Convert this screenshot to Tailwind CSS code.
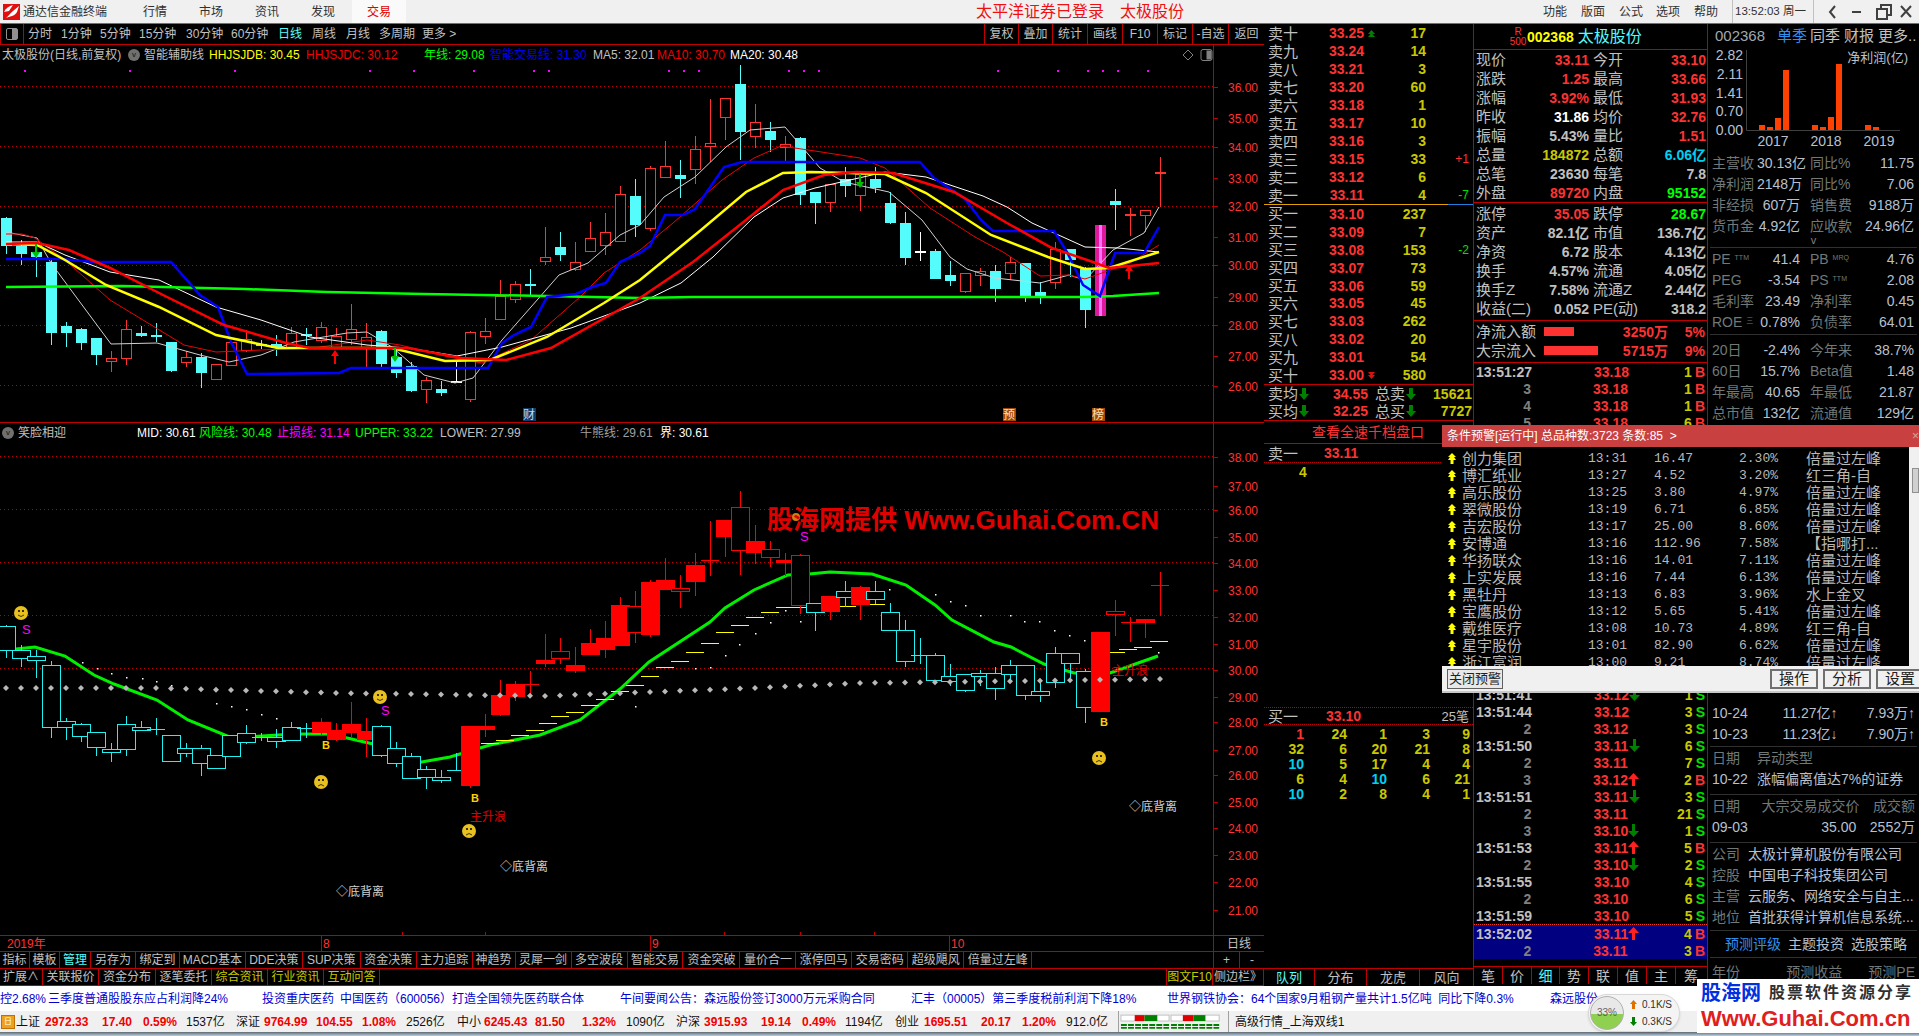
<!DOCTYPE html>
<html lang="zh">
<head>
    <meta charset="UTF-8">
    <title>通达信金融终端</title>
    <script src="https://cdn.jsdelivr.net/npm/@tailwindcss/browser@4"></script>
</head>
<body class="relative flex flex-col w-[1919px] h-[1036px] overflow-hidden bg-black text-[12px] leading-none text-[#c0c0c0] font-['Liberation_Sans','Noto_Sans_CJK_SC',sans-serif]">

    <!-- Title bar -->
    <header class="flex items-center h-[24px] shrink-0 bg-[#f0f0f0] border-b border-[#707070] text-[#303030]">
        <svg class="ml-[3px] w-[17px] h-[16px]" viewBox="0 0 17 16"><rect width="17" height="16" fill="#e01010"/><path d="M3 14 C6 12 7 9 10 7 L16 2 L14 8 C12 12 8 12 3 14Z" fill="#fff"/><path d="M1 8 C3 4 6 2 10 1 L6 7Z" fill="#fff"/></svg>
        <span class="ml-[3px] w-[120px]">通达信金融终端</span>
        <span class="w-[56px]">行情</span>
        <span class="w-[56px]">市场</span>
        <span class="w-[56px]">资讯</span>
        <span class="w-[41px]">发现</span>
        <span class="flex items-center justify-center w-[54px] h-full bg-[#fafafa] text-[#e00000]">交易</span>
        <span class="ml-[570px] w-[144px] text-[16px] text-[#f01010]">太平洋证券已登录</span>
        <span class="w-[423px] text-[16px] text-[#f01010]">太极股份</span>
        <span class="w-[38px]">功能</span>
        <span class="w-[38px]">版面</span>
        <span class="w-[37px]">公式</span>
        <span class="w-[38px]">选项</span>
        <span class="w-[38px]">帮助</span>
        <span class="flex items-center shrink-0 h-full w-[82px] px-[2px] border-x border-[#c0c0c0] text-[11.5px] whitespace-nowrap">13:52:03 周一</span>
        <svg class="shrink-0 w-[104px] h-[20px]" viewBox="0 0 104 20" fill="none" stroke="#404040" stroke-width="2"><path d="M21 4 L16 10 L21 16"/><path d="M38 10 H47"/><path d="M63 7 H73 V17 H63Z M67 7 V3 H77 V13 H73"/><path d="M87 4 L97 15 M97 4 L87 15"/></svg>
    </header>

    <div class="flex h-[962px] shrink-0">
        <!-- Charts -->
        <div class="flex flex-col w-[1264px] shrink-0">
            <nav class="flex h-[21px] shrink-0 items-center border-b border-[#c00000]">
                <span class="flex items-center justify-center w-[24px] h-full border-x border-[#c00000]"><span class="w-[12px] h-[12px] rounded-[2px] border border-[#909090] bg-[linear-gradient(90deg,#000_50%,#909090_50%)]"></span></span>
                <span class="ml-[4px] w-[33px]">分时</span>
                <span class="w-[39px]">1分钟</span>
                <span class="w-[39px]">5分钟</span>
                <span class="w-[47px]">15分钟</span>
                <span class="w-[45px]">30分钟</span>
                <span class="w-[47px]">60分钟</span>
                <span class="w-[34px] text-[#54fcfc]">日线</span>
                <span class="w-[34px]">周线</span>
                <span class="w-[33px]">月线</span>
                <span class="w-[43px]">多周期</span>
                <span class="w-[562px]">更多 &gt;</span>
                <span class="flex items-center justify-center w-[34px] h-full border-l border-[#c00000]">复权</span>
                <span class="flex items-center justify-center w-[34px] h-full border-l border-[#c00000]">叠加</span>
                <span class="flex items-center justify-center w-[35px] h-full border-l border-[#c00000]">统计</span>
                <span class="flex items-center justify-center w-[35px] h-full border-l border-[#c00000]">画线</span>
                <span class="flex items-center justify-center w-[35px] h-full border-l border-[#c00000]">F10</span>
                <span class="flex items-center justify-center w-[35px] h-full border-l border-[#c00000]">标记</span>
                <span class="flex items-center justify-center w-[36px] h-full border-l border-[#c00000]">-自选</span>
                <span class="flex items-center justify-center w-[36px] h-full border-l border-[#c00000]">返回</span>
            </nav>

            <!-- Main K-line chart -->
            <section class="relative h-[378px] shrink-0 border-b border-[#c00000]">
                <svg id="mainChart" class="absolute inset-0" width="1264" height="378" viewBox="0 45 1264 378"></svg>
                <div class="relative flex items-center h-[19px] pl-[2px]">
                    <span class="w-[126px]">太极股份(日线,前复权)</span>
                    <span class="flex items-center justify-center w-[12px] h-[12px] mr-[4px] rounded-full bg-[#707070] text-[8px] text-[#111]">v</span>
                    <span class="w-[65px]">智能辅助线</span>
                    <span class="w-[97px] text-[#ffff00]">HHJSJDB: 30.45</span>
                    <span class="w-[118px] text-[#f00000]">HHJSJDC: 30.12</span>
                    <span class="w-[66px] text-[#00ff00]">年线: 29.08</span>
                    <span class="w-[103px] text-[#0000f0]">智能交易线: 31.30</span>
                    <span class="w-[64px]">MA5: 32.01</span>
                    <span class="w-[73px] text-[#f00000]">MA10: 30.70</span>
                    <span class="w-[452px] text-white">MA20: 30.48</span>
                    <svg class="w-[32px] h-[14px]" viewBox="0 0 32 14" fill="none" stroke="#808080"><path d="M6 2 L11 7 L6 12 L1 7Z"/><rect x="19" y="1.5" width="11" height="11" rx="2"/><rect x="25" y="3" width="4" height="8" fill="#808080"/></svg>
                </div>
            </section>

            <!-- Lower signal chart -->
            <section class="relative h-[512px] shrink-0">
                <svg id="subChart" class="absolute inset-0" width="1264" height="512" viewBox="0 423 1264 512"></svg>
                <div class="relative flex items-center h-[19px] pl-[2px]">
                    <span class="flex items-center justify-center w-[12px] h-[12px] mr-[4px] rounded-full bg-[#707070] text-[8px] text-[#111]">v</span>
                    <span class="w-[119px]">笑脸相迎</span>
                    <span class="w-[62px] text-white">MID: 30.61</span>
                    <span class="w-[78px] text-[#00ff00]">风险线: 30.48</span>
                    <span class="w-[78px] text-[#ff00ff]">止损线: 31.14</span>
                    <span class="w-[85px] text-[#00ff00]">UPPER: 33.22</span>
                    <span class="w-[140px]">LOWER: 27.99</span>
                    <span class="w-[80px] text-[#a0a0a0]">牛熊线: 29.61</span>
                    <span class="text-white">界: 30.61</span>
                </div>
            </section>

            <!-- Time axis -->
            <div class="flex h-[16px] shrink-0 items-center border-t border-[#c00000] text-[#ff3232]">
                <span class="w-[321px] pl-[7px]">2019年</span>
                <span class="flex items-center w-[329px] h-full pl-[1px] border-l border-[#c00000]">8</span>
                <span class="flex items-center w-[299px] h-full pl-[1px] border-l border-[#c00000]">9</span>
                <span class="flex items-center w-[264px] h-full pl-[1px] border-l border-[#c00000]">10</span>
                <span class="flex items-center justify-center w-[51px] h-full border-l border-[#c00000] text-[#c0c0c0]">日线</span>
            </div>

            <!-- Button rows -->
            <div id="btnRow1" class="flex h-[17px] shrink-0 items-center border-t border-[#c00000]"></div>
            <div class="flex h-[18px] shrink-0 items-center border-y border-[#c00000]">
                <span class="flex items-center justify-center w-[43px] h-full border-r border-[#c00000]">扩展∧</span>
                <span class="flex items-center justify-center w-[56px] h-full border-r border-[#c00000]">关联报价</span>
                <span class="flex items-center justify-center w-[57px] h-full border-r border-[#c00000]">资金分布</span>
                <span class="flex items-center justify-center w-[56px] h-full border-r border-[#c00000]">逐笔委托</span>
                <span class="flex items-center justify-center w-[56px] h-full border-r border-[#c00000] text-[#c8c800]">综合资讯</span>
                <span class="flex items-center justify-center w-[56px] h-full border-r border-[#c00000] text-[#c8c800]">行业资讯</span>
                <span class="flex items-center justify-center w-[56px] h-full border-r border-[#c00000] text-[#c8c800]">互动问答</span>
                <span class="w-[786px]"></span>
                <span class="flex items-center justify-center w-[47px] h-full border-x border-[#c00000] text-[#c8c800]">图文F10</span>
                <span class="flex items-center justify-center w-[51px] h-full border-r border-[#c00000]">侧边栏》</span>
            </div>
        </div>

        <!-- Order book -->
        <div class="flex flex-col w-[210px] shrink-0 border-r border-[#c00000] text-[15px]">
            <div id="asks" class="flex flex-col h-[180px] pt-[0px]"></div>
            <div class="h-[1px] shrink-0 bg-[linear-gradient(90deg,#e0a000_88%,#2080e0_88%)]"></div>
            <div id="bids" class="flex flex-col h-[180px] border-b border-[#c00000]"></div>
            <div class="flex flex-col justify-center h-[36px] shrink-0 border-b border-[#c00000]">
                <div class="grid grid-cols-[100px_60px_44px] items-center h-[18px] pl-[4px]">
                    <span class="flex items-center">卖均<svg class="w-[12px] h-[12px]" viewBox="0 0 12 12"><path d="M4 0H8V6H11L6 12L1 6H4Z" fill="#008000"/></svg><b class="ml-auto text-[14px] text-[#ff3232]">34.55</b></span>
                    <span class="flex items-center pl-[7px] whitespace-nowrap">总卖<svg class="w-[12px] h-[12px]" viewBox="0 0 12 12"><path d="M4 0H8V6H11L6 12L1 6H4Z" fill="#008000"/></svg></span>
                    <b class="text-right text-[14px] text-[#c8c800]">15621</b>
                </div>
                <div class="grid grid-cols-[100px_60px_44px] items-center h-[18px] pl-[4px]">
                    <span class="flex items-center">买均<svg class="w-[12px] h-[12px]" viewBox="0 0 12 12"><path d="M4 0H8V6H11L6 12L1 6H4Z" fill="#008000"/></svg><b class="ml-auto text-[14px] text-[#ff3232]">32.25</b></span>
                    <span class="flex items-center pl-[7px] whitespace-nowrap">总买<svg class="w-[12px] h-[12px]" viewBox="0 0 12 12"><path d="M4 0H8V6H11L6 12L1 6H4Z" fill="#008000"/></svg></span>
                    <b class="text-right text-[14px] text-[#c8c800]">7727</b>
                </div>
            </div>
            <div class="flex items-center h-[23px] shrink-0 pl-[48px] border-b border-[#c00000] text-[14px] text-[#ff3232]">
                <span>查看全速千档盘口</span>
            </div>
            <div class="flex items-center h-[19px] shrink-0 pl-[4px] border-b border-dotted border-[#c00000]">
                <span class="w-[56px]">卖一</span><b class="text-[14px] text-[#ff3232]">33.11</b>
            </div>
            <b class="h-[244px] shrink-0 pt-[2px] pl-[35px] text-[14px] text-[#c8c800]">4</b>
            <div class="flex items-center justify-between h-[18px] shrink-0 px-[4px] border-y border-dotted border-[#c00000] text-[#c0c0c0]">
                <span class="flex items-center"><span class="w-[58px]">买一</span><b class="text-[14px] text-[#ff3232]">33.10</b></span><span class="text-[13px]">25笔</span>
            </div>
            <div id="queue" class="flex-1 pt-[1px] text-[14px] font-bold"></div>
            <div class="flex h-[18px] shrink-0 items-center border-t border-[#c00000] text-[13px]">
                <span class="flex items-center justify-center w-[51px] h-full border-r border-[#c00000] text-[#54fcfc]">队列</span>
                <span class="flex items-center justify-center w-[52px] h-full border-r border-[#c00000]">分布</span>
                <span class="flex items-center justify-center w-[53px] h-full border-r border-[#c00000]">龙虎</span>
                <span class="flex items-center justify-center w-[53px] h-full">风向</span>
            </div>
        </div>

        <!-- Quote and tick list -->
        <div class="flex flex-col w-[234px] shrink-0 border-r border-[#c00000] text-[15px]">
            <div class="flex items-center h-[26px] shrink-0 pl-[36px] border-b border-[#c00000]">
                <span class="flex flex-col items-center w-[16px] text-[10px] leading-[10px] text-[#ff3232]"><span>R</span><span>500</span></span>
                <b class="ml-[1px] text-[14px] text-[#ffff00]">002368</b>
                <span class="ml-[4px] text-[16px] text-[#54fcfc]">太极股份</span>
            </div>
            <div id="quoteA" class="flex flex-col h-[153px] shrink-0 border-b border-[#c00000]"></div>
            <div id="quoteB" class="flex flex-col h-[118px] shrink-0 pt-[1px] border-b border-[#c00000]"></div>
            <div class="flex flex-col h-[42px] shrink-0 pt-[1px] border-b border-[#c00000]">
                <div class="flex items-center h-[19px] px-[2px]">
                    <span class="w-[68px]">净流入额</span><span class="w-[30px] h-[9px] bg-[#ff3232]"></span>
                    <b class="w-[94px] text-right text-[14px] text-[#ff3232]">3250万</b><b class="flex-1 text-right text-[14px] text-[#ff3232]">5%</b>
                </div>
                <div class="flex items-center h-[19px] px-[2px]">
                    <span class="w-[68px]">大宗流入</span><span class="w-[54px] h-[9px] bg-[#ff3232]"></span>
                    <b class="w-[70px] text-right text-[14px] text-[#ff3232]">5715万</b><b class="flex-1 text-right text-[14px] text-[#ff3232]">9%</b>
                </div>
            </div>
            <div id="ticks" class="flex flex-col h-[603px] shrink-0 text-[14px]"></div>
            <div class="flex h-[18px] shrink-0 items-center border-t border-[#c00000] text-[14px]">
                <span class="flex items-center justify-center w-[29px] h-full border-r border-[#c00000]">笔</span>
                <span class="flex items-center justify-center w-[29px] h-full border-r border-[#c00000]">价</span>
                <span class="flex items-center justify-center w-[28px] h-full border-r border-[#c00000] text-[#54fcfc]">细</span>
                <span class="flex items-center justify-center w-[29px] h-full border-r border-[#c00000]">势</span>
                <span class="flex items-center justify-center w-[29px] h-full border-r border-[#c00000]">联</span>
                <span class="flex items-center justify-center w-[29px] h-full border-r border-[#c00000]">值</span>
                <span class="flex items-center justify-center w-[29px] h-full border-r border-[#c00000]">主</span>
                <span class="flex items-center justify-center w-[30px] h-full">筹</span>
            </div>
        </div>

        <!-- F10 side column -->
        <div class="flex flex-col flex-1 text-[14px] text-[#b8c0d0]">
            <div class="flex items-center h-[21px] shrink-0 pl-[7px] pt-[2px] text-[15px]">
                <span class="w-[62px] text-[#a0a8b0]">002368</span>
                <span class="w-[33px] text-[#3090f0]">单季</span>
                <span class="w-[34px] text-[#c0c0c0]">同季</span>
                <span class="w-[34px] text-[#c0c0c0]">财报</span>
                <span class="text-[#c0c0c0] whitespace-nowrap">更多..</span>
            </div>
            <svg class="shrink-0" width="211" height="107" viewBox="1708 45 211 107">
                <g fill="#b8c0d0" font-size="14" text-anchor="end"><text x="1743" y="60">2.82</text><text x="1743" y="79">2.11</text><text x="1743" y="98">1.41</text><text x="1743" y="116">0.70</text><text x="1743" y="135">0.00</text></g>
                <text x="1908" y="62" fill="#b8c0d0" font-size="13" text-anchor="end">净利润(亿)</text>
                <path d="M1746.5 50V130.5H1900" stroke="#404040" fill="none"/>
                <g fill="#ff4000"><rect x="1759" y="125" width="6" height="5"/><rect x="1767" y="127" width="6" height="3"/><rect x="1775" y="118" width="6" height="12"/><rect x="1783" y="70" width="6" height="60"/><rect x="1812" y="125" width="6" height="5"/><rect x="1820" y="127" width="6" height="3"/><rect x="1828" y="117" width="6" height="13"/><rect x="1836" y="64" width="6" height="66"/><rect x="1865" y="125" width="6" height="5"/><rect x="1873" y="127" width="6" height="3"/></g>
                <g fill="#b8c0d0" font-size="14" text-anchor="middle"><text x="1773" y="146">2017</text><text x="1826" y="146">2018</text><text x="1879" y="146">2019</text></g>
            </svg>
            <div id="finA" class="shrink-0"></div>
            <div class="flex items-end justify-center h-[10px] shrink-0 pb-[0px] text-[11px] text-[#808080]"><span>v</span></div>
            <div class="h-[1px] shrink-0 mt-[1px] mx-[2px] bg-[#303030]"></div>
            <div id="finB" class="shrink-0"></div>
            <div class="h-[1px] shrink-0 mt-[2px] mb-[4px] mx-[2px] bg-[#303030]"></div>
            <div id="finC" class="shrink-0"></div>
            <div class="h-[1px] shrink-0 mt-[2px] mx-[2px] bg-[#303030]"></div>
            <div class="h-[276px] shrink-0"></div>
            <div class="flex items-center justify-between h-[21px] shrink-0 px-[4px] text-[14px]"><span class="w-[50px]">10-24</span><span class="w-[62px] text-right">11.27亿↑</span><span class="w-[64px] text-right">7.93万↑</span></div>
            <div class="flex items-center justify-between h-[21px] shrink-0 px-[4px] text-[14px]"><span class="w-[50px]">10-23</span><span class="w-[62px] text-right">11.23亿↓</span><span class="w-[64px] text-right">7.90万↑</span></div>
            <div class="h-[1px] shrink-0 mt-[2px] mx-[2px] bg-[#303030]"></div>
            <div class="flex items-center h-[21px] shrink-0 px-[4px] text-[#707878]"><span class="w-[45px]">日期</span><span>异动类型</span></div>
            <div class="flex items-center h-[21px] shrink-0 px-[4px]"><span class="w-[45px]">10-22</span><span>涨幅偏离值达7%的证券</span></div>
            <div class="h-[1px] shrink-0 mt-[5px] mx-[2px] bg-[#303030]"></div>
            <div class="flex items-center justify-between h-[21px] shrink-0 px-[4px] text-[#707878]"><span>日期</span><span class="ml-[8px]">大宗交易成交价</span><span>成交额</span></div>
            <div class="flex items-center justify-between h-[21px] shrink-0 px-[4px]"><span>09-03</span><span class="ml-[60px]">35.00</span><span>2552万</span></div>
            <div class="h-[1px] shrink-0 mt-[5px] mx-[2px] bg-[#303030]"></div>
            <div class="flex items-center h-[21px] shrink-0 px-[4px]"><span class="w-[36px] text-[#707878]">公司</span><span class="whitespace-nowrap">太极计算机股份有限公司</span></div>
            <div class="flex items-center h-[21px] shrink-0 px-[4px]"><span class="w-[36px] text-[#707878]">控股</span><span class="whitespace-nowrap">中国电子科技集团公司</span></div>
            <div class="flex items-center h-[21px] shrink-0 px-[4px]"><span class="w-[36px] text-[#707878]">主营</span><span class="whitespace-nowrap">云服务、网络安全与自主...</span></div>
            <div class="flex items-center h-[21px] shrink-0 px-[4px]"><span class="w-[36px] text-[#707878]">地位</span><span class="whitespace-nowrap">首批获得计算机信息系统...</span></div>
            <div class="h-[1px] shrink-0 mt-[3px] mx-[2px] bg-[#303030]"></div>
            <div class="flex items-center justify-center gap-[7px] h-[26px] shrink-0 pl-[5px]"><span class="text-[#3090f0]">预测评级</span><span>主题投资</span><span>选股策略</span></div>
            <div class="h-[1px] shrink-0 mx-[2px] bg-[#303030]"></div>
            <div class="flex items-center justify-between h-[27px] shrink-0 px-[4px] text-[#707878]"><span>年份</span><span class="ml-[20px]">预测收益</span><span>预测PE</span></div>
        </div>
    </div>

    <!-- News ticker -->
    <div class="flex items-center h-[25px] shrink-0 bg-white text-[12px] text-[#0000d0] whitespace-nowrap overflow-hidden">
        <span class="w-[48px] shrink-0">控2.68%</span>
        <span class="w-[214px] shrink-0">三季度普通股股东应占利润降24%</span>
        <span class="w-[78px] shrink-0">投资重庆医药</span>
        <span class="w-[280px] shrink-0">中国医药（600056）打造全国领先医药联合体</span>
        <span class="w-[291px] shrink-0">午间要闻公告：森远股份签订3000万元采购合同</span>
        <span class="w-[256px] shrink-0">汇丰（00005）第三季度税前利润下降18%</span>
        <span class="w-[383px] shrink-0">世界钢铁协会：64个国家9月粗钢产量共计1.5亿吨&nbsp;&nbsp;同比下降0.3%</span>
        <span class="shrink-0">森远股份</span>
    </div>

    <!-- Market index status bar -->
    <div class="flex items-center h-[21px] shrink-0 bg-[#f0f0f0] text-[#101010] whitespace-nowrap">
        <span class="flex items-center justify-center w-[14px] h-[14px] mx-[1px] bg-[#f0a020] border border-[#c07000] text-[8px] text-white">日</span>
        <span class="w-[29px]">上证</span><b class="w-[57px] text-[#f00000]">2972.33</b><b class="w-[41px] text-[#f00000]">17.40</b><b class="w-[43px] text-[#f00000]">0.59%</b><span class="w-[50px]">1537亿</span>
        <span class="w-[28px]">深证</span><b class="w-[52px] text-[#f00000]">9764.99</b><b class="w-[46px] text-[#f00000]">104.55</b><b class="w-[44px] text-[#f00000]">1.08%</b><span class="w-[51px]">2526亿</span>
        <span class="w-[27px]">中小</span><b class="w-[51px] text-[#f00000]">6245.43</b><b class="w-[47px] text-[#f00000]">81.50</b><b class="w-[44px] text-[#f00000]">1.32%</b><span class="w-[50px]">1090亿</span>
        <span class="w-[28px]">沪深</span><b class="w-[57px] text-[#f00000]">3915.93</b><b class="w-[41px] text-[#f00000]">19.14</b><b class="w-[43px] text-[#f00000]">0.49%</b><span class="w-[50px]">1194亿</span>
        <span class="w-[29px]">创业</span><b class="w-[57px] text-[#f00000]">1695.51</b><b class="w-[41px] text-[#f00000]">20.17</b><b class="w-[44px] text-[#f00000]">1.20%</b><span class="w-[52px]">912.0亿</span>
        <svg class="w-[111px] h-[21px] shrink-0 border-x border-[#a0a0a0]" viewBox="0 0 111 21">
            <rect x="2" y="4" width="49" height="6" fill="#fff" stroke="#c0c0c0"/><rect x="16" y="4" width="10" height="6" fill="#e00000"/><rect x="26" y="4" width="13" height="6" fill="#008000"/>
            <rect x="53" y="4" width="49" height="6" fill="#fff" stroke="#c0c0c0"/><rect x="65" y="4" width="11" height="6" fill="#e00000"/><rect x="76" y="4" width="12" height="6" fill="#008000"/>
            <path d="M2 14H51M2 17H51M53 14H102M53 17H102" stroke="#008000" stroke-width="2" stroke-dasharray="6 1.2"/>
        </svg>
        <span class="ml-[6px]">高级行情_上海双线1</span>
    </div>
    <div class="h-[4px] shrink-0 bg-[linear-gradient(180deg,#606870,#b8d0e0)]"></div>

    <!-- Alert popup -->
    <aside class="absolute left-[1442px] top-[425px] flex flex-col w-[477px] h-[268px] bg-black border-b-2 border-[#c8c8c8]">
        <div class="flex items-center justify-between h-[22px] shrink-0 pl-[5px] bg-[#c84040] text-white">
            <span>条件预警[运行中] 总品种数:3723 条数:85 &nbsp;&gt;</span><span class="text-[#e0a0a0]">×</span>
        </div>
        <div class="relative flex-1 overflow-hidden pr-[10px]">
            <div id="alerts" class="pt-[3px]"></div>
            <div class="absolute right-0 top-0 bottom-0 w-[10px] bg-[#f0f0f0]"><div class="mt-[21px] h-[25px] w-[7px] ml-[3px] bg-[#d0d0d0] border border-[#909090]"></div></div>
        </div>
        <div class="flex items-center h-[25px] shrink-0 px-[5px] bg-[#f0f0f0] text-[15px] text-[#202020]">
            <span class="flex items-center justify-center w-[56px] h-[20px] border border-[#606060] bg-[#e8e8e8] text-[13px]">关闭预警</span>
            <span class="ml-auto flex items-center justify-center w-[48px] h-[20px] border-2 border-[#707070] bg-[#f0f0f0]">操作</span>
            <span class="ml-[5px] flex items-center justify-center w-[48px] h-[20px] border-2 border-[#707070] bg-[#f0f0f0]">分析</span>
            <span class="ml-[5px] -mr-[10px] flex items-center justify-center w-[48px] h-[20px] border-2 border-[#707070] bg-[#f0f0f0]">设置</span>
        </div>
    </aside>

    <!-- Net speed ball -->
    <div class="absolute left-[1588px] top-[994px] flex items-center w-[92px] h-[38px] rounded-full bg-[#f4f4f4] border border-[#d8d8d8] shadow">
        <span class="relative flex items-center justify-center w-[34px] h-[34px] ml-[1px] rounded-full overflow-hidden border border-[#b0b0b0] bg-[linear-gradient(180deg,#e8e8e8_52%,#90d050_52%)] text-[10px] text-[#606060]">33%</span>
        <div class="flex flex-col gap-[7px] ml-[6px] text-[10px] text-[#303030]">
            <span class="flex items-center gap-[5px]"><svg class="w-[7px] h-[9px]" viewBox="0 0 7 9"><path d="M2 9V4H0L3.5 0L7 4H5V9Z" fill="#e07000"/></svg>0.1K/S</span>
            <span class="flex items-center gap-[5px]"><svg class="w-[7px] h-[9px]" viewBox="0 0 7 9"><path d="M2 0V5H0L3.5 9L7 5H5V0Z" fill="#008000"/></svg>0.3K/S</span>
        </div>
    </div>

    <!-- Site watermark -->
    <div class="absolute left-[1697px] top-[979px] flex flex-col w-[222px] h-[54px] pl-[4px] bg-white whitespace-nowrap">
        <div class="flex items-center gap-[8px] h-[27px]">
            <b class="text-[20px] text-[#0030e0]">股海网</b>
            <span class="text-[16px] tracking-[2px] text-[#303030] font-bold">股票软件资源分享</span>
        </div>
        <b class="mt-[2px] text-[22px] text-[#e02020]">Www.Guhai.Com.cn</b>
    </div>

    <script>
        const RED = '#ff3232', CYAN = '#54fcfc', GRID = '#c00000';
        const SVGNS = 'http://www.w3.org/2000/svg';
        function add(svg, tag, attrs, text) {
            const n = document.createElementNS(SVGNS, tag);
            for (const k in attrs) n.setAttribute(k, attrs[k]);
            if (text !== undefined) n.textContent = text;
            svg.appendChild(n);
            return n;
        }
        const kx = k => Math.round(6.1 + 14.98 * k);

        // [bodyTop, bodyBottom, high, low, type]  c = down, r = up, w = white doji
        const K = [
            [218,246,217,254,'c'],[246,254,240,265,'c'],[252,257,245,277,'c'],[262,333,258,345,'c'],[326,333,322,347,'c'],
            [329,343,328,350,'c'],[338,355,338,365,'c'],[358,361,351,372,'r'],[329,358,320,365,'r'],[333,336,326,337,'c'],
            [335,337,323,342,'c'],[342,371,342,372,'c'],[357,362,351,367,'r'],[357,373,353,388,'c'],[364,379,364,379,'r'],
            [342,365,342,365,'r'],[339,350,330,352,'r'],[344,346,340,349,'c'],[344,348,335,356,'c'],[333,347,327,348,'r'],
            [334,335,328,345,'c'],[327,340,322,343,'r'],[336,347,328,348,'r'],[329,339,304,345,'r'],[337,347,323,367,'r'],
            [331,364,330,367,'c'],[357,373,350,378,'c'],[366,391,362,392,'c'],[380,389,377,403,'r'],[389,393,381,396,'c'],
            [381,382,362,383,'w'],[332,399,331,402,'r'],[331,336,318,344,'r'],[296,319,280,320,'r'],[284,299,281,303,'r'],
            [284,285,269,295,'c'],[257,261,227,265,'r'],[247,255,232,261,'c'],[262,269,242,271,'r'],[238,251,222,251,'r'],
            [232,245,213,255,'r'],[194,241,186,241,'r'],[196,225,179,237,'c'],[168,228,166,231,'r'],[166,177,141,178,'r'],
            [175,179,160,198,'c'],[149,169,136,184,'r'],[143,146,99,162,'r'],[98,117,98,140,'r'],[84,132,65,160,'c'],
            [122,136,104,148,'r'],[131,140,122,152,'c'],[144,147,136,162,'r'],[138,195,137,205,'c'],[192,203,192,224,'c'],
            [184,202,184,212,'r'],[179,186,167,197,'c'],[174,195,173,211,'r'],[179,188,167,193,'c'],[203,223,192,224,'c'],
            [223,258,212,265,'c'],[251,252,232,261,'w'],[251,279,249,279,'c'],[275,281,261,286,'c'],[273,291,273,293,'r'],
            [271,275,268,286,'r'],[271,289,265,302,'c'],[262,273,257,280,'r'],[263,297,263,302,'c'],[292,297,282,304,'c'],
            [249,282,242,289,'r'],[249,260,249,277,'c'],[269,310,267,328,'c'],[225,316,225,316,'r'],[201,205,189,230,'c'],
            [214,215,208,236,'r'],[210,215,210,232,'r'],[172,173,157,207,'r']
        ];

        // ---- main chart ----
        const main = document.getElementById('mainChart');
        [86.5,146.5,206.5,265.5,325.5,385.5].forEach(y => add(main,'line',{x1:0,x2:1213,y1:y,y2:y,stroke:GRID,'stroke-dasharray':'1 3'}));
        add(main,'line',{x1:1213.5,x2:1213.5,y1:45,y2:423,stroke:GRID});
        [[36,87],[35,118],[34,147],[33,178],[32,206],[31,237],[30,265],[29,297],[28,325],[27,356],[26,386]].forEach(([p,y]) => {
            add(main,'line',{x1:1213,x2:1218,y1:y+.5,y2:y+.5,stroke:GRID});
            add(main,'text',{x:1228,y:y+5,fill:RED,'font-size':12},p+'.00');
        });
        [25,130,235,370,414,474,534,549,669,684,699,789,804,819,998,1058,1088,1103,1118,1148].forEach(x => add(main,'rect',{x:x-1,y:70,width:2,height:2,fill:'#ff00ff'}));

        const cg = add(main,'g',{'shape-rendering':'crispEdges'});
        K.forEach((c,k) => {
            const x = kx(k), col = c[4]=='c' ? CYAN : c[4]=='w' ? '#ffffff' : RED;
            if (k==73) {
                add(cg,'rect',{x:x-5,y:225,width:11,height:91,fill:'#e0189c'});
                add(cg,'rect',{x:x-1,y:225,width:3,height:91,fill:'#ff70ff'});
                return;
            }
            add(cg,'line',{x1:x+.5,x2:x+.5,y1:c[2],y2:c[3],stroke:col});
            if (c[1]-c[0] <= 2) add(cg,'rect',{x:x-5,y:c[0],width:11,height:2,fill:col});
            else if (c[4]=='c') add(cg,'rect',{x:x-5,y:c[0],width:11,height:c[1]-c[0],fill:col});
            else add(cg,'rect',{x:x-4.5,y:c[0]+.5,width:10,height:c[1]-c[0],fill:'#000',stroke:col});
        });

        const P = a => a.map(p => p.join(',')).join(' ');
        const mLines = [
            ['#d0d0d0',1,[[6,232],[37,238],[51,263],[111,344],[157,343],[200,355],[229,362],[261,355],[294,342],[347,333],[367,332],[392,347],[424,375],[455,383],[473,378],[502,340],[531,307],[559,275],[588,263],[620,235],[640,225],[664,197],[695,177],[726,147],[750,130],[785,127],[820,168],[844,182],[889,192],[922,220],[950,257],[967,269],[995,278],[1040,283],[1069,275],[1085,280],[1113,250],[1144,233],[1159,207]]],
            ['#f00000',1,[[6,234],[22,234],[35,238],[65,260],[110,300],[143,320],[184,345],[216,352],[261,350],[314,348],[367,340],[400,345],[449,357],[482,363],[531,340],[580,297],[604,273],[640,250],[673,223],[722,180],[754,158],[781,146],[815,151],[860,158],[885,168],[930,208],[975,237],[1003,252],[1040,276],[1069,275],[1085,279],[1130,263],[1159,245]]],
            ['#ffffff',1,[[6,242],[37,242],[65,255],[110,272],[159,280],[216,307],[261,320],[310,337],[367,345],[408,348],[457,356],[502,347],[571,328],[640,303],[681,283],[713,257],[754,217],[783,198],[815,188],[885,172],[926,177],[983,196],[1007,207],[1032,223],[1085,247],[1118,248],[1159,252]]],
            ['#00ff00',2.5,[[6,287],[122,286],[245,289],[327,292],[424,294],[547,296],[640,298],[693,297],[799,297],[1085,297],[1113,296],[1159,293]]],
            ['#0000ff',2.5,[[6,259],[61,259],[94,262],[171,262],[200,295],[218,307],[231,342],[247,374],[253,374],[339,373],[351,368],[488,368],[502,343],[514,335],[531,327],[547,297],[576,294],[592,287],[606,283],[620,262],[640,253],[650,246],[665,215],[683,215],[695,209],[724,167],[742,162],[920,162],[934,178],[964,198],[981,220],[993,231],[1054,231],[1067,252],[1083,285],[1100,296],[1115,253],[1144,253],[1159,227]]],
            ['#ff0000',2.5,[[6,244],[37,243],[69,250],[110,268],[163,295],[224,325],[286,343],[310,348],[408,348],[461,358],[506,360],[551,348],[640,298],[693,262],[746,220],[783,190],[824,175],[856,172],[893,173],[954,192],[1007,223],[1052,248],[1093,262],[1109,268],[1130,266],[1159,263]]],
            ['#ffff00',2.5,[[6,244],[37,245],[65,260],[106,285],[159,307],[216,335],[278,348],[392,348],[445,361],[490,360],[547,337],[604,303],[640,280],[701,230],[746,192],[783,173],[811,172],[885,174],[926,193],[991,235],[1048,257],[1085,269],[1109,268],[1159,252]]]
        ];
        // red thick line goes over the yellow one
        [mLines[0],mLines[1],mLines[2],mLines[3],mLines[4],mLines[6],mLines[5]].forEach(l => add(main,'polyline',{points:P(l[2]),fill:'none',stroke:l[0],'stroke-width':l[1]}));

        function arrow(svg,x,y,col,down) {
            const s = down ? 1 : -1;
            add(svg,'path',{d:`M${x-1} ${y-8*s}H${x+1}V${y}H${x+4}L${x} ${y+6*s}L${x-4} ${y}H${x-1}Z`,fill:col});
        }
        arrow(main,36,252,'#00c000',true);
        arrow(main,335,356,'#ff0000',false);
        arrow(main,395,356,'#00c000',true);
        arrow(main,860,182,'#00c000',true);
        arrow(main,1129,271,'#ff0000',false);
        [[529,'财','#103a68','#c0d8f0'],[1009,'预','#a04808','#ffe0b0'],[1098,'榜','#a04808','#ffe0b0']].forEach(([x,t,bg,fg]) => {
            add(main,'rect',{x:x-6,y:408,width:13,height:13,fill:bg});
            add(main,'text',{x:x-6,y:419,fill:fg,'font-size':12},t);
        });

        // ---- lower chart ----
        const sub = document.getElementById('subChart');
        [456.5,509.5,562.5,615.5,668.5].forEach(y => add(sub,'line',{x1:0,x2:1213,y1:y,y2:y,stroke:GRID,'stroke-dasharray':'1 3'}));
        add(sub,'line',{x1:1213.5,x2:1213.5,y1:423,y2:935,stroke:GRID});
        [[38,457],[37,486],[36,510],[35,537],[34,563],[33,590],[32,617],[31,644],[30,670],[29,697],[28,722],[27,750],[26,775],[25,802],[24,828],[23,855],[22,882],[21,910]].forEach(([p,y]) => {
            add(sub,'line',{x1:1213,x2:1218,y1:y+.5,y2:y+.5,stroke:GRID});
            add(sub,'text',{x:1228,y:y+5,fill:RED,'font-size':12},p+'.00');
        });
        [402,485,724,800,874].forEach(x => add(sub,'line',{x1:x+.5,x2:x+.5,y1:932,y2:935,stroke:GRID}));
        add(sub,'polyline',{points:P([[16,649],[35,647],[65,656],[94,675],[114,684],[157,700],[188,720],[232,738],[294,734],[330,734],[373,744],[416,763],[450,757],[490,745],[540,735],[580,720],[620,689],[649,662],[710,622],[725,608],[754,590],[788,575],[809,574],[830,572],[872,574],[906,585],[935,605],[952,620],[994,642],[1011,647],[1044,664],[1074,673],[1110,673],[1158,656]]),fill:'none',stroke:'#00f000','stroke-width':3});

        // white small dots and the yellow support dashes
        [[82,662],[97,668],[111,673],[126,677],[142,678],[156,681],[171,685],[216,703],[231,706],[246,709],[261,714],[276,718],[635,706],[680,689],[695,668],[710,667],[725,655],[739,644],[755,633],[770,622],[785,610],[800,621],[889,589],[935,594],[950,601],[965,605],[980,615],[1010,615],[1024,621],[1039,621],[1054,630],[1069,635],[1084,640],[1099,648],[1158,652]].forEach(([x,y]) => add(sub,'rect',{x,y,width:1.5,height:1.5,fill:'#ffffff'}));
        const lg = add(sub,'g',{'shape-rendering':'crispEdges'});
        [[490,743],[505,740],[520,735],[535,730],[548,723],[560,716],[575,712],[590,705],[605,699],[620,691],[635,685],[650,676],[665,667],[680,661],[695,652],[710,643],[725,632],[740,625],[755,617],[770,612],[785,607],[800,607],[847,606],[876,604],[1116,652],[1128,649],[1143,647],[1159,641]].forEach(([x,y]) => add(lg,'rect',{x:x-9,y,width:18,height:1,fill:'#ffff00'}));

        const mapY = y => Math.round(509.8 + (y - 86.7) * 0.883);
        const redPhase = k => (k>=21&&k<=24)||(k>=31&&k<=53)||k==55||k==57||(k>=73&&k<=77);
        const sg = add(sub,'g',{'shape-rendering':'crispEdges'});
        K.forEach((c,k) => {
            const x = kx(k), t = mapY(c[0]), b = mapY(c[1]), hot = redPhase(k);
            const col = hot ? '#ff0000' : '#20f0f0';
            add(sg,'line',{x1:x+.5,x2:x+.5,y1:mapY(c[2]),y2:mapY(c[3]),stroke:col});
            if (b-t <= 2) add(sg,'rect',{x:x-9,y:t,width:18,height:1,fill:col});
            else if (hot && c[4]=='r') add(sg,'rect',{x:x-9,y:t,width:19,height:b-t,fill:col});
            else add(sg,'rect',{x:x-8.5,y:t+.5,width:18,height:b-t,fill:'#000',stroke:col});
        });

        const dStops = [[0,688],[10,688],[22,693],[36,696],[50,688],[57,683],[63,682],[77,679]];
        const dY = k => { for (let i=1;i<dStops.length;i++) if (k<=dStops[i][0]) { const a=dStops[i-1],b=dStops[i]; return a[1]+(b[1]-a[1])*(k-a[0])/(b[0]-a[0]); } };
        for (let k=0;k<=77;k++) {
            const x=kx(k), y=dY(k);
            add(sub,'path',{d:`M${x} ${y-3}L${x+3} ${y}L${x} ${y+3}L${x-3} ${y}Z`,fill:'#b8b8b8'});
        }

        function face(x,y,sad) {
            add(sub,'circle',{cx:x,cy:y,r:7,fill:'#e8c020'});
            add(sub,'rect',{x:x-3,y:y-3,width:2,height:2,fill:'#403000'});
            add(sub,'rect',{x:x+1,y:y-3,width:2,height:2,fill:'#403000'});
            add(sub,'path',{d:sad?`M${x-3} ${y+4}Q${x} ${y+1} ${x+3} ${y+4}`:`M${x-3} ${y+2}Q${x} ${y+5} ${x+3} ${y+2}`,fill:'none',stroke:'#403000'});
        }
        face(21,613,false); face(380,697,false); face(321,782,true); face(469,831,true); face(1099,758,true);
        add(sub,'circle',{cx:796,cy:517,r:4,fill:'#d08010'});
        [[22,634],[381,715],[800,541]].forEach(([x,y]) => add(sub,'text',{x,y,fill:'#ff00ff','font-size':13},'S'));
        [[322,749],[471,802],[1100,726]].forEach(([x,y]) => add(sub,'text',{x,y,fill:'#ffd000','font-size':11,'font-weight':'bold'},'B'));
        [[470,821],[1112,675]].forEach(([x,y]) => add(sub,'text',{x,y,fill:'#e00000','font-size':12},'主升浪'));
        [[336,896],[500,871],[1129,811]].forEach(([x,y]) => add(sub,'text',{x,y,fill:'#d0d0d0','font-size':12},'◇底背离'));
        add(sub,'text',{x:767,y:529,fill:'#e00000','font-size':26,'font-weight':'bold'},'股海网提供 Www.Guhai.Com.CN');

        // ---- bottom button row ----
        const btns = [['指标',30],['模板',30],['管理',31,1],['另存为',45],['绑定到',44],['MACD基本',66],['DDE决策',57],['SUP决策',58],['资金决策',56],['主力追踪',56],['神趋势',43],['灵犀一剑',56],['多空波段',56],['智能交易',56],['资金突破',57],['量价合一',56],['涨停回马',56],['交易密码',56],['超级飓风',56],['倍量过左峰',68]];
        let row = '';
        btns.forEach(b => { row += `<span class="flex items-center justify-center h-full border-r border-[#c00000] ${b[2]?'text-[#54fcfc]':''}" style="width:${b[1]}px">${b[0]}</span>`; });
        row += '<span class="w-[181px]"></span><span class="flex items-center justify-center w-[26px] h-full border-l border-[#c00000]">+</span><span class="flex items-center justify-center w-[25px] h-full border-l border-[#c00000]">-</span>';
        document.getElementById('btnRow1').innerHTML = row;

        // ---- order book ----
        const bookRow = (label,price,qty,delta,dcls,mark) => `<div class="relative grid grid-cols-[36px_60px_62px_43px] items-center h-[18px] pl-[4px]"><span>${label}</span><b class="text-right text-[14px] text-[#ff3232]">${price}</b><b class="text-right text-[14px] text-[#c8c800]">${qty}</b><span class="text-right text-[12px] ${dcls}">${delta}</span>${mark}</div>`;
        const markG = '<svg class="absolute left-[104px] top-[6px] w-[7px] h-[7px]" viewBox="0 0 7 7"><path d="M3.5 0L7 4H0ZM3.5 3L7 7H0Z" fill="#008000"/></svg>';
        const markR = '<svg class="absolute left-[104px] top-[6px] w-[7px] h-[7px]" viewBox="0 0 7 7"><path d="M0 0H7L3.5 4ZM0 3H7L3.5 7Z" fill="#e01010"/></svg>';
        document.getElementById('asks').innerHTML = [
            ['卖十','33.25','17','','',markG],['卖九','33.24','14'],['卖八','33.21','3'],['卖七','33.20','60'],['卖六','33.18','1'],
            ['卖五','33.17','10'],['卖四','33.16','3'],['卖三','33.15','33','+1','text-[#ff3232]'],['卖二','33.12','6'],['卖一','33.11','4','-7','text-[#00e000]']
        ].map(r => bookRow(r[0],r[1],r[2],r[3]||'',r[4]||'',r[5]||'')).join('');
        document.getElementById('bids').innerHTML = [
            ['买一','33.10','237'],['买二','33.09','7'],['买三','33.08','153','-2','text-[#00e000]'],['买四','33.07','73'],['买五','33.06','59'],
            ['买六','33.05','45'],['买七','33.03','262'],['买八','33.02','20'],['买九','33.01','54'],['买十','33.00','580','','',markR]
        ].map(r => bookRow(r[0],r[1],r[2],r[3]||'',r[4]||'',r[5]||'')).join('');

        // [value, colour] queue
        const Y='text-[#c8c800]', C='text-[#00d0f0]', R='text-[#ff3232]';
        document.getElementById('queue').innerHTML = [
            [['1',R],['24',Y],['1',Y],['3',Y],['9',Y]],[['32',Y],['6',Y],['20',Y],['21',Y],['8',Y]],[['10',C],['5',Y],['17',Y],['4',Y],['4',Y]],
            [['6',Y],['4',Y],['10',C],['6',Y],['21',Y]],[['10',C],['2',Y],['8',Y],['4',Y],['1',Y]]
        ].map(r => `<div class="grid grid-cols-[40px_43px_40px_43px_40px] h-[15px] items-center text-right">${r.map(c => `<span class="${c[1]}">${c[0]}</span>`).join('')}</div>`).join('');

        // ---- quote ----
        const W='text-[#c0c0c0]', G='text-[#00ff00]', L='text-[#00d0f0]';
        const quoteRow = (a,av,ac,b,bv,bc) => `<div class="grid grid-cols-[113px_113px] gap-x-[4px] items-center h-[19px] pl-[2px]"><span class="flex justify-between items-center"><span>${a}</span><b class="text-[14px] ${ac}">${av}</b></span><span class="flex justify-between items-center"><span>${b}</span><b class="text-[14px] ${bc}">${bv}</b></span></div>`;
        document.getElementById('quoteA').innerHTML = [
            ['现价','33.11',R,'今开','33.10',R],['涨跌','1.25',R,'最高','33.66',R],['涨幅','3.92%',R,'最低','31.93',R],['昨收','31.86','text-white','均价','32.76',R],
            ['振幅','5.43%',W,'量比','1.51',R],['总量','184872',Y,'总额','6.06亿',L],['总笔','23630',W,'每笔','7.8',W],['外盘','89720',R,'内盘','95152',G]
        ].map(r => quoteRow(...r)).join('');
        document.getElementById('quoteB').innerHTML = [
            ['涨停','35.05',R,'跌停','28.67',G],['资产','82.1亿',W,'市值','136.7亿',W],['净资','6.72',W,'股本','4.13亿',W],['换手','4.57%',W,'流通','4.05亿',W],
            ['换手Z','7.58%',W,'流通Z','2.44亿',W],['收益(二)','0.052',W,'PE(动)','318.2',W]
        ].map(r => quoteRow(...r)).join('');

        // ---- tick list ----
        const up = '<svg class="w-[11px] h-[13px]" viewBox="0 0 11 13"><path d="M4 13V6H0L5.5 0L11 6H7V13Z" fill="#ff2020"/></svg>';
        const dn = '<svg class="w-[11px] h-[13px]" viewBox="0 0 11 13"><path d="M4 0V7H0L5.5 13L11 7H7V0Z" fill="#008000"/></svg>';
        const tickRow = (t,p,a,v,s,hl) => {
            const isTime = t.includes(':');
            const bs = s=='B' ? 'text-[#ff3232]' : 'text-[#00e000]';
            return `<div class="flex items-center h-[17px] shrink-0 pl-[2px] pr-[2px] ${hl?'bg-[#000080]':''}">
                <span class="w-[56px] ${isTime?'text-[#c0c0c0]':'text-right text-[#808080]'} font-bold">${t}</span>
                <b class="ml-[62px] w-[35px] text-[#ff3232]">${p}</b><span class="flex w-[12px]">${a=='u'?up:a=='d'?dn:''}</span>
                <b class="w-[53px] text-right text-[#c8c800]">${v}</b><b class="ml-[3px] ${bs}">${s}</b></div>`;
        };
        const tickA = [['13:51:27','33.18','','1','B'],['3','33.18','','1','B'],['4','33.18','','1','B'],['5','33.18','','6','B']];
        const tickB = [['13:51:41','33.12','d','1','S'],['13:51:44','33.12','','3','S'],['2','33.12','','3','S'],['13:51:50','33.11','d','6','S'],['2','33.11','','7','S'],['3','33.12','u','2','B'],['13:51:51','33.11','d','3','S'],['2','33.11','','21','S'],['3','33.10','d','1','S'],['13:51:53','33.11','u','5','B'],['2','33.10','d','2','S'],['13:51:55','33.10','','4','S'],['2','33.10','','6','S'],['13:51:59','33.10','','5','S']];
        const tickC = [['13:52:02','33.11','u','4','B',1],['2','33.11','','3','B',1]];
        document.getElementById('ticks').innerHTML = tickA.map(r => tickRow(...r)).join('')
            + '<div class="h-[255px] shrink-0"></div>'
            + tickB.map(r => tickRow(...r)).join('')
            + '<div class="border-t border-dotted border-[#ff3232]"></div>'
            + tickC.map(r => tickRow(...r)).join('');

        // ---- financials ----
        const D='text-[#707878]';
        const finRow = (a,av,b,bv) => `<div class="flex items-center h-[21px] pl-[4px] pr-[5px] whitespace-nowrap"><span class="w-[45px] ${D}">${a}</span><span class="w-[43px] text-right">${av}</span><span class="ml-[10px] w-[44px] ${D}">${b}</span><span class="flex-1 text-right">${bv}</span></div>`;
        document.getElementById('finA').innerHTML = [['主营收','30.13亿','同比%','11.75'],['净利润','2148万','同比%','7.06'],['非经损','607万','销售费','9188万'],['货币金','4.92亿','应收款','24.96亿']].map(r => finRow(...r)).join('');
        document.getElementById('finB').innerHTML = [['PE <sup class="text-[7px]">TTM</sup>','41.4','PB <sup class="text-[7px]">MRQ</sup>','4.76'],['PEG','-3.54','PS <sup class="text-[7px]">TTM</sup>','2.08'],['毛利率','23.49','净利率','0.45'],['ROE <sup class="text-[7px]">三</sup>','0.78%','负债率','64.01']].map(r => finRow(...r)).join('');
        document.getElementById('finC').innerHTML = [['20日','-2.4%','今年来','38.7%'],['60日','15.7%','Beta值','1.48'],['年最高','40.65','年最低','21.87'],['总市值','132亿','流通值','129亿']].map(r => finRow(...r)).join('');

        // ---- alert list ----
        const alerts = [['创力集团','13:31','16.47','2.30%','倍量过左峰'],['博汇纸业','13:27','4.52','3.20%','红三角-自'],['高乐股份','13:25','3.80','4.97%','倍量过左峰'],['翠微股份','13:19','6.71','6.85%','倍量过左峰'],['吉宏股份','13:17','25.00','8.60%','倍量过左峰'],['安博通','13:16','112.96','7.58%','【指哪打...'],['华扬联众','13:16','14.01','7.11%','倍量过左峰'],['上实发展','13:16','7.44','6.13%','倍量过左峰'],['黑牡丹','13:13','6.83','3.96%','水上金叉'],['宝鹰股份','13:12','5.65','5.41%','倍量过左峰'],['戴维医疗','13:08','10.73','4.89%','红三角-自'],['星宇股份','13:01','82.90','6.62%','倍量过左峰'],['浙江富润','13:00','9.21','8.74%','倍量过左峰']];
        document.getElementById('alerts').innerHTML = alerts.map(a => `<div class="flex items-center h-[17px] text-[#b8b8b8] whitespace-nowrap"><svg class="ml-[6px] w-[8px] h-[11px]" viewBox="0 0 8 11"><path d="M4 0L8 4H6L8 7H5.5V11H2.5V7H0L2 4H0Z" fill="#ffff00"/></svg><span class="ml-[6px] w-[126px] text-[15px]">${a[0]}</span><span class="w-[66px] text-[13px] font-['Liberation_Mono',monospace]">${a[1]}</span><span class="w-[85px] text-[13px] font-['Liberation_Mono',monospace]">${a[2]}</span><span class="w-[67px] text-[13px] font-['Liberation_Mono',monospace]">${a[3]}</span><span class="text-[15px]">${a[4]}</span></div>`).join('');
    </script>
</body>
</html>
